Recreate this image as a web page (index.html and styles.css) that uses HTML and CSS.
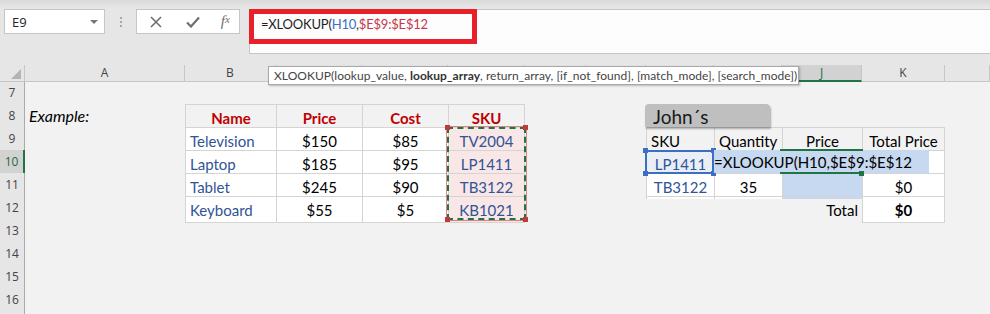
FILE: index.html
```html
<!DOCTYPE html>
<html lang="en">
<head>
  <meta charset="UTF-8">
  <title>XLOOKUP example</title>
  <link rel="stylesheet" href="styles.css">
</head>
<body>

<div class="formula-bar">
  <div class="name-box">
    <span>E9</span>
    <span class="caret"></span>
  </div>
  <div class="grip"><i></i><i></i><i></i></div>
  <div class="fx-buttons">
    <span class="fx-btn">
      <svg width="12" height="12" viewBox="0 0 12 12"><path d="M1 1 L11 11 M11 1 L1 11" stroke="#707070" stroke-width="1.6" fill="none"/></svg>
    </span>
    <span class="fx-btn">
      <svg width="14" height="12" viewBox="0 0 14 12"><path d="M1 6.5 L5 10.5 L13 1.5" stroke="#707070" stroke-width="2.2" fill="none"/></svg>
    </span>
    <span class="fx-btn fx-label">f<sub>x</sub></span>
  </div>
  <div class="formula-input">
    <span class="formula-text">=XLOOKUP(<span class="ref-blue">H10</span>,<span class="ref-red">$E$9:$E$12</span></span>
    <!-- red callout around the formula -->
    <div class="callout"></div>
  </div>
</div>

<div class="sheet">
  <!-- C..I letters sit under the tooltip, so they are left blank -->
  <div class="row head-row">
    <div class="corner"><span></span></div>
    <div class="ch">A</div>
    <div class="ch">B</div>
    <div class="ch"></div>
    <div class="ch"></div>
    <div class="ch"></div>
    <div class="ch"></div>
    <div class="ch"></div>
    <div class="ch"></div>
    <div class="ch"></div>
    <div class="ch active">J</div>
    <div class="ch">K</div>
    <div class="ch"></div>
  </div>

  <div class="row"><div class="rh">7</div></div>

  <div class="row">
    <div class="rh">8</div>
    <div class="c example">Example:</div>
    <div class="c t hdr">Name</div>
    <div class="c t hdr">Price</div>
    <div class="c t hdr">Cost</div>
    <div class="c t r hdr">SKU</div>
  </div>

  <div class="row">
    <div class="rh">9</div>
    <div class="c"></div>
    <div class="c t fill name">Television</div>
    <div class="c t fill mid">$150</div>
    <div class="c t fill mid">$85</div>
    <div class="c t r sku">TV2004</div>
    <div class="c"></div>
    <div class="c"></div>
    <div class="c t left">SKU</div>
    <div class="c t left">Quantity</div>
    <div class="c t mid">Price</div>
    <div class="c t r mid">Total Price</div>
  </div>

  <div class="row">
    <div class="rh active">10</div>
    <div class="c"></div>
    <div class="c t fill name">Laptop</div>
    <div class="c t fill mid">$185</div>
    <div class="c t fill mid">$95</div>
    <div class="c t r sku">LP1411</div>
    <div class="c"></div>
    <div class="c"></div>
    <div class="c t code picked">LP1411</div>
    <div class="c t fill"></div>
    <div class="c t fill"></div>
    <div class="c t r fill"></div>
  </div>

  <div class="row">
    <div class="rh">11</div>
    <div class="c"></div>
    <div class="c t fill name">Tablet</div>
    <div class="c t fill mid">$245</div>
    <div class="c t fill mid">$90</div>
    <div class="c t r sku">TB3122</div>
    <div class="c"></div>
    <div class="c"></div>
    <div class="c t fill code">TB3122</div>
    <div class="c t fill mid">35</div>
    <div class="c t blue"></div>
    <div class="c t r fill mid">$0</div>
  </div>

  <div class="row">
    <div class="rh">12</div>
    <div class="c"></div>
    <div class="c t b fill name">Keyboard</div>
    <div class="c t b fill mid">$55</div>
    <div class="c t b fill mid">$5</div>
    <div class="c t r b sku">KB1021</div>
    <div class="c"></div>
    <div class="c"></div>
    <div class="c top-only"></div>
    <div class="c top-only"></div>
    <div class="c top-only right">Total</div>
    <div class="c t r b fill mid strong">$0</div>
  </div>

  <div class="row"><div class="rh">13</div></div>
  <div class="row"><div class="rh">14</div></div>
  <div class="row"><div class="rh">15</div></div>
  <div class="row"><div class="rh">16</div></div>
  <div class="row"><div class="rh"></div></div>

  <!-- floating things over the grid -->
  <div class="tooltip">XLOOKUP(lookup_value, <b>lookup_array</b>, return_array, [if_not_found], [match_mode], [search_mode])</div>

  <div class="shape-label">John´s</div>

  <div class="range-red">
    <i class="h tl"></i><i class="h tr"></i><i class="h bl"></i><i class="h br"></i>
  </div>

  <div class="range-blue">
    <i class="h tl"></i><i class="h tr"></i><i class="h bl"></i><i class="h br"></i>
  </div>

  <div class="edit-box">=XLOOKUP(H10,$E$9:$E$12</div>

  <div class="active-cell"><i></i></div>
</div>

</body>
</html>
```

FILE: styles.css
```css
* {
  box-sizing: border-box;
}
body {
  margin: 0;
  width: 990px;
  height: 314px;
  overflow: hidden;
  background: #f2f2f2;
  font-family: Lato, "Open Sans", sans-serif;
}

/* ---------- formula bar ---------- */
.formula-bar {
  height: 65px;
  background: linear-gradient(#d9d9d9, #e6e6e6 8px);
  display: flex;
  align-items: flex-start;
  padding-top: 9px;
}
.name-box {
  margin-left: 4px;
  width: 101px;
  height: 25px;
  border: 1px solid #c6c6c6;
  background: #fff;
  display: flex;
  align-items: center;
  justify-content: space-between;
  padding: 0 6px 0 7px;
  font: 13px "Open Sans", sans-serif;
  color: #222;
}
.caret {
  width: 0;
  height: 0;
  border-left: 4px solid transparent;
  border-right: 4px solid transparent;
  border-top: 4px solid #767676;
}
.grip {
  margin: 8px 0 0 15px;
  display: flex;
  flex-direction: column;
  gap: 2px;
}
.grip i {
  width: 2px;
  height: 2px;
  background: #a8a8a8;
}
.fx-buttons {
  margin-left: 14px;
  width: 104px;
  height: 25px;
  border: 1px solid #c6c6c6;
  background: #fff;
  display: flex;
  align-items: center;
}
.fx-btn {
  width: 38px;
  display: flex;
  justify-content: center;
}
.fx-label {
  width: 28px;
  font: italic 15px "Liberation Serif", serif;
  color: #707070;
}
.fx-label sub {
  font-size: 11px;
  vertical-align: -2px;
}
.formula-input {
  position: relative;
  margin-left: 9px;
  flex: 1;
  height: 45px;
  border: 1px solid #c6c6c6;
  border-right: none;
  background: #fdfdfd;
  padding: 6px 0 0 11px;
  font-size: 13px;
  letter-spacing: -0.2px;
  color: #1e1e1e;
}
.ref-blue {
  color: #3a6fc4;
}
.ref-red {
  color: #c8374b;
}
.callout {
  position: absolute;
  left: -1px;
  top: -1px;
  width: 228px;
  height: 35px;
  border: 5px solid #e8202a;
}

/* ---------- sheet ---------- */
.sheet {
  position: relative;
  height: 249px;
  overflow: hidden;
}
.row {
  display: grid;
  grid-template-columns: 25px 160px 91px 86px 86px 77px 61px 60px 68px 68px 80px 83px 45px;
  height: 23px;
}
.head-row {
  height: 16px;
  background: #e6e6e6;
}
.corner {
  border-right: 1px solid #c6c6c6;
  border-bottom: 1px solid #c6c6c6;
  position: relative;
}
.corner span {
  position: absolute;
  right: 3px;
  bottom: 2px;
  width: 0;
  height: 0;
  border-left: 10px solid transparent;
  border-bottom: 10px solid #b4b4b4;
}
.ch {
  border-right: 1px solid #c6c6c6;
  border-bottom: 1px solid #c6c6c6;
  text-align: center;
  font: 12px/15px "Open Sans", sans-serif;
  color: #444;
}
.ch.active {
  background: #d2d2d2;
  color: #1d6a3e;
  border-bottom: 2px solid #217346;
}
.rh {
  background: #e6e6e6;
  border-right: 1px solid #ababab;
  border-bottom: 1px solid #c6c6c6;
  text-align: center;
  font: 12px/23px "Open Sans", sans-serif;
  color: #444;
}
.rh.active {
  background: #d2d2d2;
  color: #1d6a3e;
  border-right: 2px solid #217346;
}

/* cells */
.c {
  padding: 1px 4px 0;
  font-size: 15px;
  line-height: 24px;
  white-space: nowrap;
  color: #000;
}
.t {
  border-top: 1px solid #d4d4d4;
  border-left: 1px solid #d4d4d4;
}
.r {
  border-right: 1px solid #d4d4d4;
}
.b {
  border-bottom: 1px solid #d4d4d4;
}
.top-only {
  border-top: 1px solid #d4d4d4;
}
.fill {
  background: #fff;
}
.blue {
  background: #c6d9f0;
}
.example {
  font-style: italic;
  font-size: 16px;
  line-height: 22px;
  padding-left: 4px;
}
.hdr {
  color: #c00000;
  font-weight: bold;
  text-align: center;
}
.name {
  color: #305496;
}
.mid {
  text-align: center;
}
.left {
  text-align: left;
}
.right {
  text-align: right;
}
.strong {
  font-weight: bold;
}
.sku {
  background: #f9e6e6;
  color: #305496;
  text-align: center;
}
.code {
  color: #305496;
  text-align: center;
}
.picked {
  background: #e9eef7;
}

/* overlays */
.tooltip {
  position: absolute;
  left: 268px;
  top: 1px;
  width: 531px;
  height: 19px;
  background: #fff;
  border: 1px solid #a8a8a8;
  box-shadow: 1px 1px 2px rgba(0, 0, 0, 0.25);
  padding-left: 5px;
  font: 12px/17px Lato, sans-serif;
  letter-spacing: 0.04px;
  color: #444;
  white-space: nowrap;
}
.tooltip b {
  color: #333;
}
.shape-label {
  position: absolute;
  left: 645px;
  top: 39px;
  width: 125px;
  height: 23px;
  background: #bfbfbf;
  border-radius: 4px 4px 1px 1px;
  box-shadow: 1px 2px 2px rgba(0, 0, 0, 0.3);
  padding-left: 8px;
  font-size: 19px;
  line-height: 25px;
  color: #1a1a1a;
}
.range-red {
  position: absolute;
  left: 447px;
  top: 62px;
  width: 79px;
  height: 93px;
  border: 2px dashed #217346;
  box-shadow: 0 0 0 1px rgba(200, 60, 60, 0.6);
}
.range-blue {
  position: absolute;
  left: 645px;
  top: 85px;
  width: 69px;
  height: 24px;
  border: 2px solid #3a6fc4;
}
.h {
  position: absolute;
  width: 5px;
  height: 5px;
}
.range-red .h {
  background: #c0393b;
}
.range-blue .h {
  background: #3a6fc4;
}
.tl { left: -4px; top: -4px; }
.tr { right: -4px; top: -4px; }
.bl { left: -4px; bottom: -4px; }
.br { right: -4px; bottom: -4px; }
.edit-box {
  position: absolute;
  left: 714px;
  top: 85px;
  width: 215px;
  height: 23px;
  background: #c6d9f0;
  font-size: 15px;
  line-height: 25px;
  white-space: nowrap;
  color: #000;
}
.active-cell {
  position: absolute;
  left: 780px;
  top: 84px;
  width: 83px;
  height: 25px;
  border-top: 2px solid #217346;
  border-bottom: 2px solid #217346;
}
.active-cell i {
  position: absolute;
  right: -1px;
  bottom: -4px;
  width: 5px;
  height: 5px;
  background: #217346;
}
```
